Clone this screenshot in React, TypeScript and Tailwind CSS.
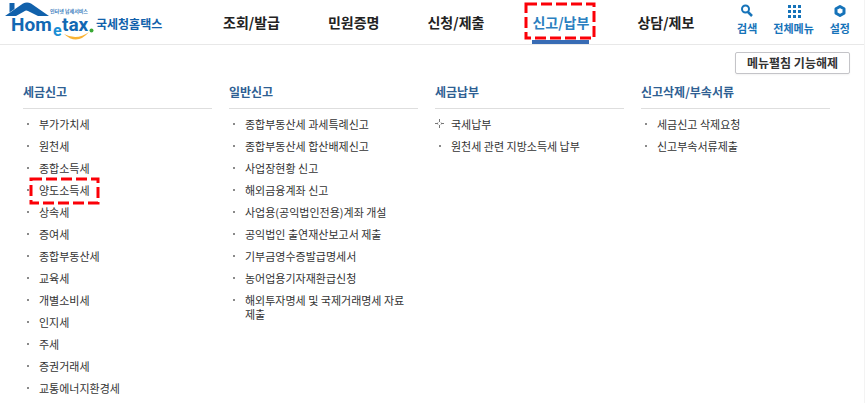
import { clsx } from 'clsx';

interface MenuItem {
  label: string;
  expandable?: boolean;
  marked?: boolean;
}

interface MenuColumn {
  title: string;
  items: MenuItem[];
}

const tabs = ['조회/발급', '민원증명', '신청/제출', '신고/납부', '상담/제보'];
const activeTab = '신고/납부';

const columns: MenuColumn[] = [
  {
    title: '세금신고',
    items: [
      { label: '부가가치세' },
      { label: '원천세' },
      { label: '종합소득세' },
      { label: '양도소득세', marked: true },
      { label: '상속세' },
      { label: '증여세' },
      { label: '종합부동산세' },
      { label: '교육세' },
      { label: '개별소비세' },
      { label: '인지세' },
      { label: '주세' },
      { label: '증권거래세' },
      { label: '교통에너지환경세' },
    ],
  },
  {
    title: '일반신고',
    items: [
      { label: '종합부동산세 과세특례신고' },
      { label: '종합부동산세 합산배제신고' },
      { label: '사업장현황 신고' },
      { label: '해외금융계좌 신고' },
      { label: '사업용(공익법인전용)계좌 개설' },
      { label: '공익법인 출연재산보고서 제출' },
      { label: '기부금영수증발급명세서' },
      { label: '농어업용기자재환급신청' },
      { label: '해외투자명세 및 국제거래명세 자료 제출' },
    ],
  },
  {
    title: '세금납부',
    items: [{ label: '국세납부', expandable: true }, { label: '원천세 관련 지방소득세 납부' }],
  },
  {
    title: '신고삭제/부속서류',
    items: [{ label: '세금신고 삭제요청' }, { label: '신고부속서류제출' }],
  },
];

// Red dashed frame laid over a menu entry
const Marker = ({ className }: { className: string }) => (
  <svg className={clsx('absolute pointer-events-none overflow-visible', className)} aria-hidden="true">
    <rect width="100%" height="100%" fill="none" stroke="#fb0007" strokeWidth="3" strokeDasharray="11 4" />
  </svg>
);

const Logo = () => (
  <a href="#" aria-label="Hometax 국세청홈택스" className="flex">
    <svg width="164" height="42" viewBox="0 0 164 42" className="font-['Noto_Sans_CJK_KR',sans-serif]">
      <path d="M5 16 L23 3.500 Q27 1.500 31 3.500 L49 16 H38 L28 11 Q26 10 24 11.500 L16 16 Z" fill="#1161ab" />
      <path d="M9.500 3 H14.500 V9 L9.500 12.500 Z" fill="#1161ab" />
      <path d="M64 34 Q77 46 89 32 Q77 41 64 34 Z" fill="#f9b233" />
      <text x="50" y="13" fontSize="5" fontWeight="700" fill="#3c80bd">인터넷 납세서비스</text>
      <g fill="#1268b3" fontFamily="Roboto, sans-serif" fontWeight="700">
        <text x="11" y="31" fontSize="19">Hom</text>
        <text x="53" y="36" fontSize="16" fill="#1b8fd6">e</text>
        <text x="62" y="31" fontSize="19">tax</text>
      </g>
      <circle cx="91.500" cy="30.500" r="2" fill="#3aa935" />
      <text x="96" y="29" fontSize="12" fontWeight="700" fill="#1161ab">국세청홈택스</text>
    </svg>
  </a>
);

const SearchIcon = () => (
  <svg width="14" height="14" viewBox="0 0 14 14" fill="none" stroke="currentColor" aria-hidden="true">
    <circle cx="5.500" cy="5" r="3.500" strokeWidth="2" />
    <path d="M8 8 L12 12" strokeWidth="2.500" />
  </svg>
);

const GridIcon = () => (
  <svg width="14" height="14" viewBox="0 0 14 14" fill="currentColor" aria-hidden="true">
    {[1, 6, 11].map((y) => [1, 6, 11].map((x) => <rect key={`${x}-${y}`} x={x} y={y} width="3" height="3" />))}
  </svg>
);

const SettingIcon = () => (
  <svg width="14" height="14" viewBox="0 0 14 14" fill="none" stroke="currentColor" aria-hidden="true">
    <path d="M7 2.500 L11 4.700 V9.300 L7 11.500 L3 9.300 V4.700 Z" strokeWidth="3" strokeLinejoin="round" />
  </svg>
);

const utilities = [
  { label: '검색', Icon: SearchIcon },
  { label: '전체메뉴', Icon: GridIcon },
  { label: '설정', Icon: SettingIcon },
];

const Bullet = ({ expandable }: { expandable?: boolean }) => (
  <svg width="10" height="14" viewBox="0 0 10 14" className="shrink-0" aria-hidden="true">
    {expandable ? (
      <path
        d="M4.500 2 V5 M4.500 8 V11 M0 6.500 H3 M6 6.500 H9 M3 5.500 L3.500 5 M5.500 5 L6 5.500 M3 7.500 L3.500 8 M5.500 8 L6 7.500"
        fill="none"
        stroke="#777"
      />
    ) : (
      <rect x="4" y="6" width="2" height="2" fill="#8a8a8a" />
    )}
  </svg>
);

const App = () => {
  return (
    <div className="bg-white border-r border-[#f3f3f3] font-['Noto_Sans_CJK_KR',sans-serif] text-[#333]">
      <header className="flex justify-between h-[45px] border-b border-[#e8e8e8]">
        <Logo />
        <nav className="flex gap-12 ml-[59px]">
          {tabs.map((tab) => (
            <a
              key={tab}
              href="#"
              className={clsx(
                'relative h-[44px] pt-3 text-sm leading-5 font-bold whitespace-nowrap',
                tab === activeTab ? 'text-[#2b7fc0] border-b-4 border-[#386cb5]' : 'text-[#222]'
              )}
            >
              {tab}
              {tab === activeTab && <Marker className="-left-1.5 top-1 w-[68px] h-[34px]" />}
            </a>
          ))}
        </nav>
        <div className="flex gap-4 ml-auto mr-3.5 pt-1">
          {utilities.map(({ label, Icon }) => (
            <button
              key={label}
              type="button"
              className="flex flex-col items-center text-[11px] leading-4 font-bold text-[#1673b9] gap-0.5 h-8 whitespace-nowrap"
            >
              <Icon />
              {label}
            </button>
          ))}
        </div>
      </header>

      <div className="flex justify-end pt-[7px] pr-3.5">
        <button
          type="button"
          className="h-[22px] px-[11px] bg-white border border-[#c4c4c8] rounded-xs shadow-xs text-xs leading-5 font-bold text-[#333]"
        >
          메뉴펼침 기능해제
        </button>
      </div>

      <main className="grid grid-cols-4 gap-x-[17px] pl-[23px] pr-[34px] pt-2 pb-2">
        {columns.map((column) => (
          <section key={column.title}>
            <h2 className="text-xs leading-5 font-bold text-[#2f5f93] pb-1.5 border-b border-[#dedede]">
              {column.title}
            </h2>
            <ul className="flex flex-col gap-2 pt-2 pr-2">
              {column.items.map((item) => (
                <li key={item.label} className="relative flex gap-1.5 text-[11px] leading-[14px] break-keep">
                  <Bullet expandable={item.expandable} />
                  <a href="#">{item.label}</a>
                  {item.marked && <Marker className="left-2 -top-1 w-[67px] h-6" />}
                </li>
              ))}
            </ul>
          </section>
        ))}
      </main>
    </div>
  );
};

export default App;
